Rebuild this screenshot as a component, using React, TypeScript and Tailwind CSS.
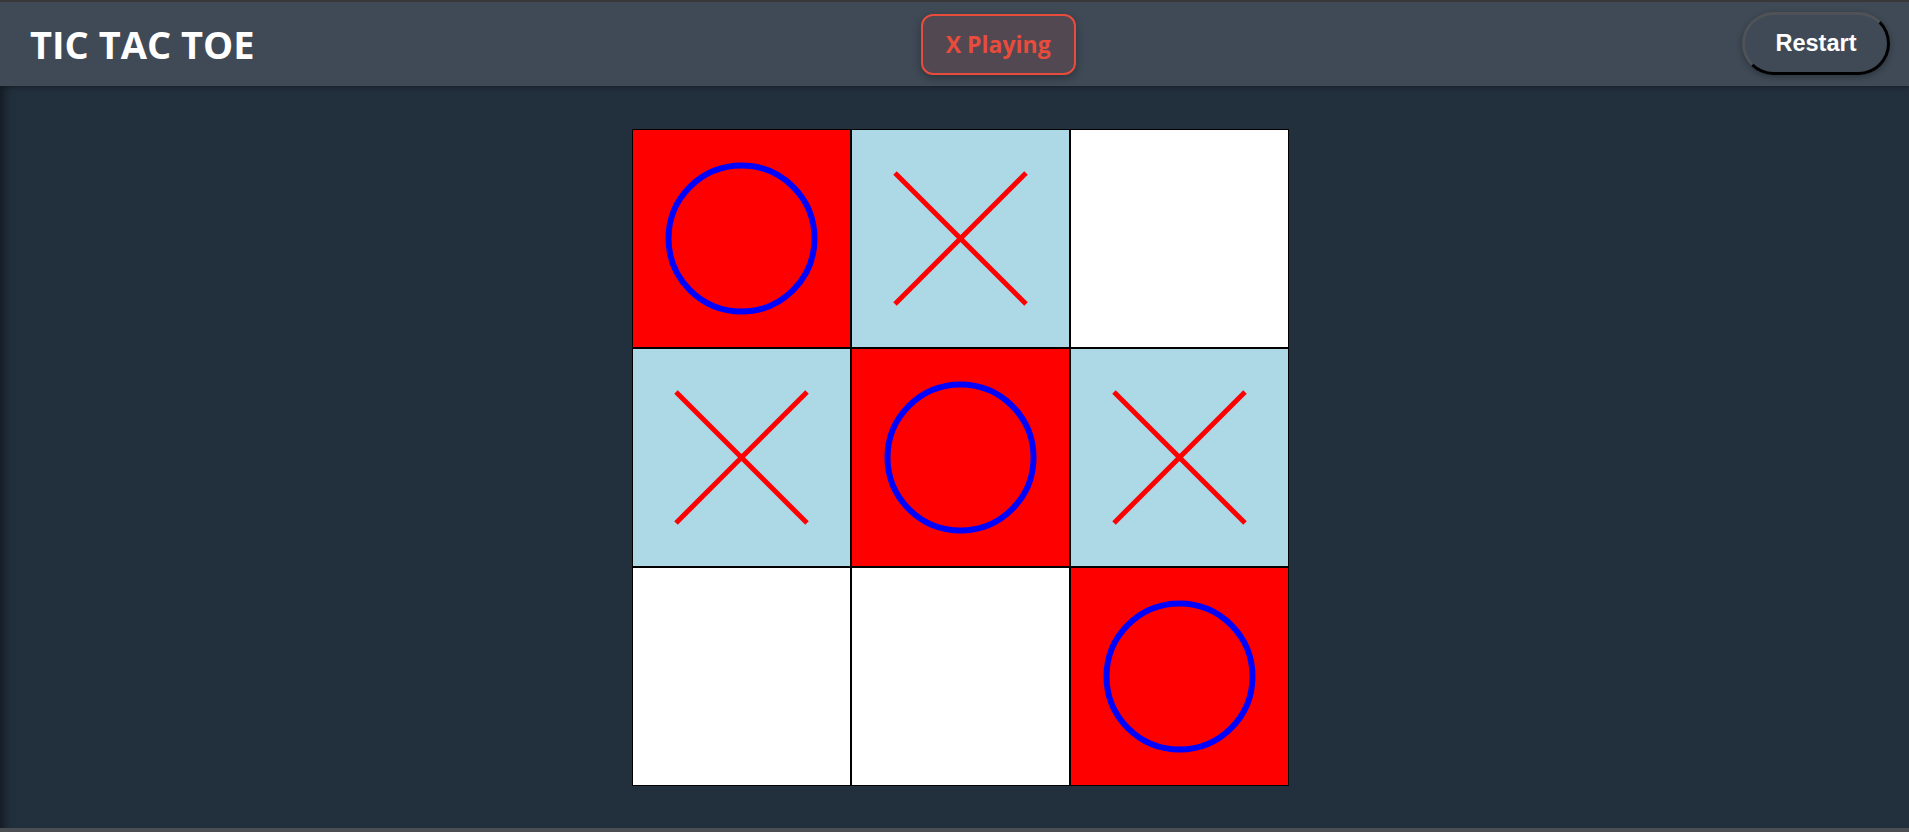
import React, { useState } from 'react';

type Mark = 'X' | 'O' | null;

const initialBoard: Mark[] = ['O', 'X', null, 'X', 'O', 'X', null, null, 'O'];

const cellBg = (m: Mark): string => {
  if (m === 'O') return 'bg-[#ff0000]';
  if (m === 'X') return 'bg-[#add8e6]';
  return 'bg-white';
};

const Cell: React.FC<{ mark: Mark; onClick: () => void }> = ({ mark, onClick }) => (
  <div
    onClick={onClick}
    className={`w-[219px] h-[219px] border border-black flex items-center justify-center cursor-pointer ${cellBg(mark)}`}
  >
    {mark === 'O' && (
      <svg width="217" height="217" viewBox="0 0 217 217">
        <circle cx="108.5" cy="108.5" r="73" fill="none" stroke="#0000ff" strokeWidth="6" />
      </svg>
    )}
    {mark === 'X' && (
      <svg width="217" height="217" viewBox="0 0 217 217">
        <line x1="43" y1="43" x2="174" y2="174" stroke="#ff0000" strokeWidth="5" />
        <line x1="174" y1="43" x2="43" y2="174" stroke="#ff0000" strokeWidth="5" />
      </svg>
    )}
  </div>
);

const App: React.FC = () => {
  const [board, setBoard] = useState<Mark[]>(initialBoard);
  const [turn, setTurn] = useState<'X' | 'O'>('X');

  const play = (i: number) => {
    if (board[i]) return;
    const next = [...board];
    next[i] = turn;
    setBoard(next);
    setTurn(turn === 'X' ? 'O' : 'X');
  };

  const restart = () => {
    setBoard(Array(9).fill(null));
    setTurn('X');
  };

  return (
    <div className="h-[832px] w-full flex flex-col bg-[#3a3a3a] font-['Open_Sans',sans-serif]">
      <div className="h-[2px] bg-[#3a3a3a]" />
      <header className="h-[84px] bg-[#3f4a56] flex items-center justify-between pl-[30px] pr-[19px] shadow-[0_2px_4px_rgba(0,0,0,0.25)] relative z-10">
        <h1 className="text-[38px] font-bold text-white leading-none">TIC TAC TOE</h1>
        <div className="w-[155px] h-[61px] flex items-center justify-center rounded-[12px] border-2 border-[#e74c3c] bg-[#514851] text-[#e74c3c] text-[23px] font-bold shadow-[0_3px_8px_rgba(0,0,0,0.3)]">
          {turn} Playing
        </div>
        <button
          onClick={restart}
          className="w-[148px] h-[63px] -mt-[1px] rounded-full border-[3px] border-t-[#4f5358] border-l-[#4f5358] border-b-black border-r-black bg-[#3f4a56] text-white text-[23.5px] font-bold font-['Liberation_Sans',Arial,sans-serif] shadow-[0_2px_6px_rgba(0,0,0,0.3)]"
        >
          Restart
        </button>
      </header>
      <main className="flex-1 bg-[#222f3d] flex items-center justify-center pl-[11px] shadow-[inset_12px_0_10px_-8px_rgba(0,0,0,0.45)]">
        <div className="grid grid-cols-3">
          {board.map((m, i) => (
            <Cell key={i} mark={m} onClick={() => play(i)} />
          ))}
        </div>
      </main>
      <div className="h-[4px] bg-[#4b4f53]" />
    </div>
  );
};

export default App;
